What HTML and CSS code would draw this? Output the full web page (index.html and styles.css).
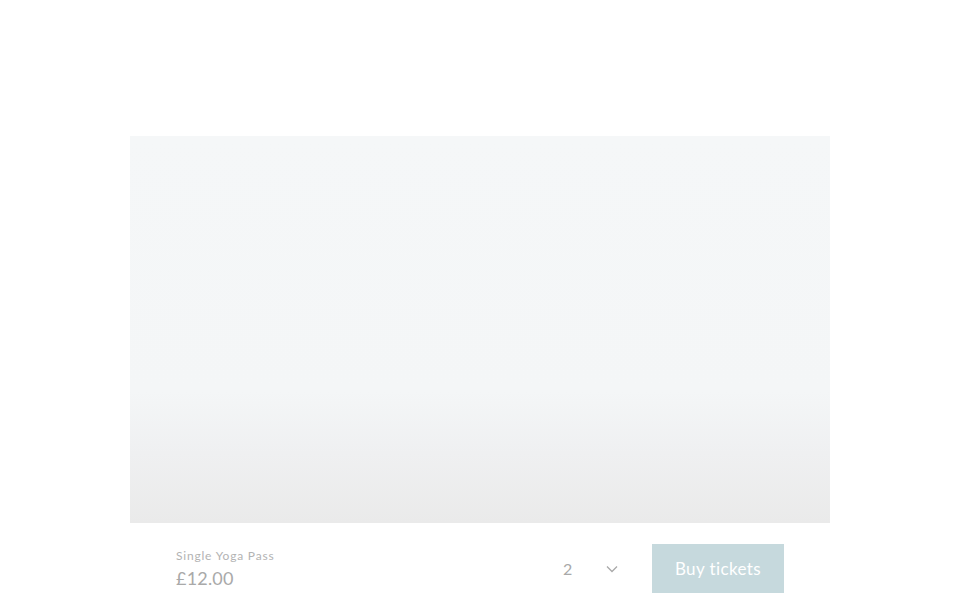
FILE: index.html
```html
<!DOCTYPE html>
<html>
<head>
<meta charset="utf-8">
<link rel="stylesheet" href="styles.css">
</head>
<body>
<div class="card">
  <div class="media"></div>
  <div class="bar">
    <div class="info">
      <div class="name">Single Yoga Pass</div>
      <div class="price">£12.00</div>
    </div>
    <div class="qty">
      <span class="num">2</span>
      <svg class="chev" width="12" height="8" viewBox="0 0 12 8"><path d="M1 1.5 L6 6.5 L11 1.5" fill="none" stroke="#a9a9a9" stroke-width="1.3"/></svg>
    </div>
    <div class="buy">Buy tickets</div>
  </div>
</div>
</body>
</html>
```
FILE: styles.css
```css
body {
  margin: 0;
  background: #fff;
  font-family: Lato, "Open Sans", sans-serif;
}
.card {
  width: 700px;
  margin: 136px auto 0;
}
.media {
  height: 387px;
  background: linear-gradient(to bottom, #f5f7f8 0%, #f4f6f7 66%, #eff0f1 82%, #eaeaea 100%);
}
.bar {
  display: flex;
  align-items: center;
  padding: 21px 46px 0 46px;
}
.info {
  flex: 1;
  margin-top: -1px;
}
.name {
  font-size: 12px;
  color: #b3b3b3;
  letter-spacing: 0.8px;
  line-height: 16px;
}
.price {
  font-size: 18px;
  color: #a9a9a9;
  letter-spacing: 0.2px;
  line-height: 22px;
  margin-top: 3px;
}
.qty {
  display: flex;
  align-items: center;
  width: 89px;
  font-size: 16px;
  color: #a9a9a9;
}
.num {
  width: 43px;
}
.chev {
  display: block;
}
.buy {
  width: 132px;
  height: 49px;
  background: #c6d9dd;
  color: #fff;
  font-size: 17px;
  letter-spacing: 0.4px;
  display: flex;
  align-items: center;
  justify-content: center;
}
```
